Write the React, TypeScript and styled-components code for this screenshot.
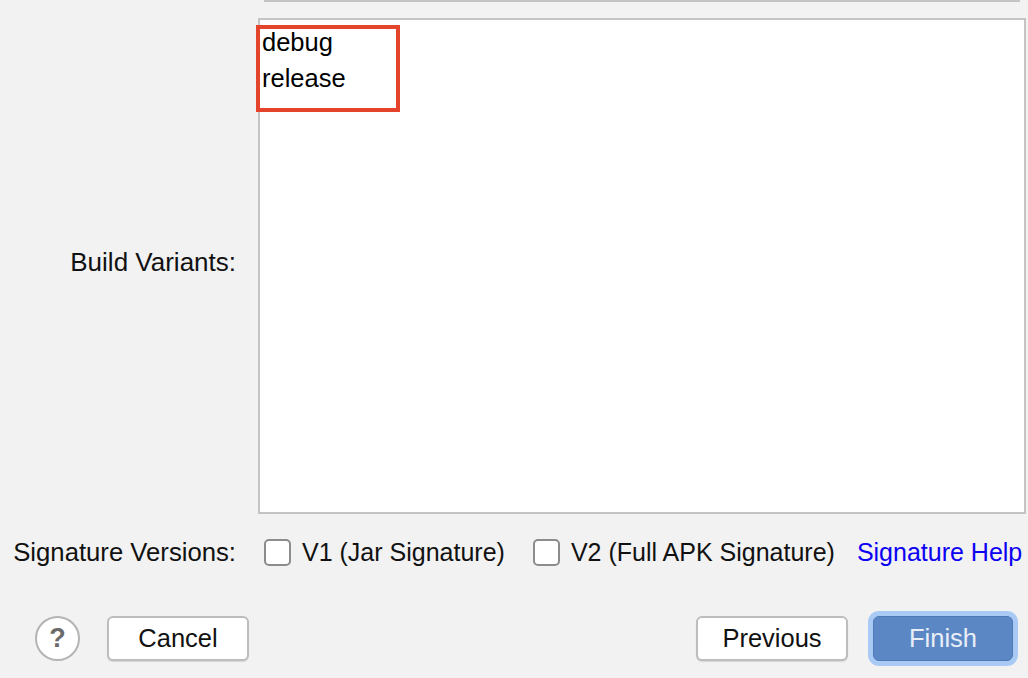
import styled, { createGlobalStyle } from "styled-components";

const GlobalStyle = createGlobalStyle`
  body {
    margin: 0;
    background: #f2f2f2;
    font-family: "Liberation Sans", Arial, sans-serif;
    font-size: 25.5px;
    color: #111;
  }
`;

const Page = styled.div`
  width: 1028px;
  height: 678px;
  overflow: hidden;
  display: flex;
  flex-direction: column;
`;

const TopEdge = styled.div`
  margin-left: 264px;
  width: 756px;
  height: 2px;
  background: #c4c4c4;
`;

const FormGrid = styled.div`
  display: grid;
  grid-template-columns: 236px 760px;
  column-gap: 22px;
  row-gap: 24px;
  margin-top: 16px;
`;

const Label = styled.div<{ $lift?: number; $size?: number }>`
  justify-self: end;
  align-self: center;
  white-space: nowrap;
  line-height: 28px;
  font-size: ${(p) => p.$size ?? 26}px;
  padding-bottom: ${(p) => p.$lift ?? 0}px;
`;

const ListBox = styled.div`
  position: relative;
  box-sizing: border-box;
  width: 768px;
  height: 496px;
  border: 2px solid #c4c4c4;
  background: #fff;
  padding: 4px 0 0 2px;
`;

const ListItem = styled.div`
  line-height: 36px;
  color: #000;
`;

const Highlight = styled.div`
  position: absolute;
  left: -4px;
  top: 5px;
  width: 144px;
  height: 87px;
  box-sizing: border-box;
  border: 4px solid #e4432c;
  pointer-events: none;
`;

const Options = styled.div`
  display: flex;
  align-items: center;
  height: 28px;
  padding-left: 6px;
  white-space: nowrap;
  font-size: 25px;
`;

const Check = styled.label<{ $gap: number }>`
  display: flex;
  align-items: center;
  gap: 11px;
  margin-right: ${(p) => p.$gap}px;
`;

const Box = styled.span`
  width: 27px;
  height: 27px;
  box-sizing: border-box;
  border: 2px solid #8c8c8c;
  border-radius: 5px;
  background: #fff;
`;

const HelpLink = styled.a`
  color: #0b00f2;
  text-decoration: none;
  cursor: pointer;
`;

const Footer = styled.div`
  display: flex;
  align-items: center;
  margin-top: 50px;
  padding: 0 15px 0 35px;
`;

const HelpButton = styled.div`
  width: 45px;
  height: 45px;
  box-sizing: border-box;
  border-radius: 50%;
  border: 2px solid #b4b4b4;
  background: #fff;
  display: flex;
  align-items: center;
  justify-content: center;
  font-weight: bold;
  font-size: 27px;
  color: #6a6a6a;
`;

const Spacer = styled.div`
  flex: 1;
`;

const Button = styled.button<{ $width: number; $primary?: boolean }>`
  width: ${(p) => p.$width}px;
  height: 45px;
  box-sizing: border-box;
  border-radius: 6px;
  font-family: inherit;
  font-size: 25.5px;
  padding: 0;
  border: ${(p) => (p.$primary ? "1px solid #4d79b8" : "2px solid #bdbdbd")};
  background: ${(p) => (p.$primary ? "#5b88c5" : "#fff")};
  color: ${(p) => (p.$primary ? "#e9eef6" : "#111")};
  box-shadow: ${(p) =>
    p.$primary ? "0 0 0 5px #a9caf4" : "0 1px 1px rgba(0,0,0,0.12)"};
`;

export default function App() {
  return (
    <Page>
      <GlobalStyle />
      <TopEdge />
      <FormGrid>
        <Label $lift={8}>Build Variants:</Label>
        <ListBox>
          <ListItem>debug</ListItem>
          <ListItem>release</ListItem>
          <Highlight />
        </ListBox>
        <Label $size={25.7}>Signature Versions:</Label>
        <Options>
          <Check $gap={28}>
            <Box />
            V1 (Jar Signature)
          </Check>
          <Check $gap={22}>
            <Box />
            V2 (Full APK Signature)
          </Check>
          <HelpLink>Signature Help</HelpLink>
        </Options>
      </FormGrid>
      <Footer>
        <HelpButton>?</HelpButton>
        <Button $width={142} style={{ marginLeft: 27 }}>
          Cancel
        </Button>
        <Spacer />
        <Button $width={152}>Previous</Button>
        <Button $width={140} $primary style={{ marginLeft: 25 }}>
          Finish
        </Button>
      </Footer>
    </Page>
  );
}
